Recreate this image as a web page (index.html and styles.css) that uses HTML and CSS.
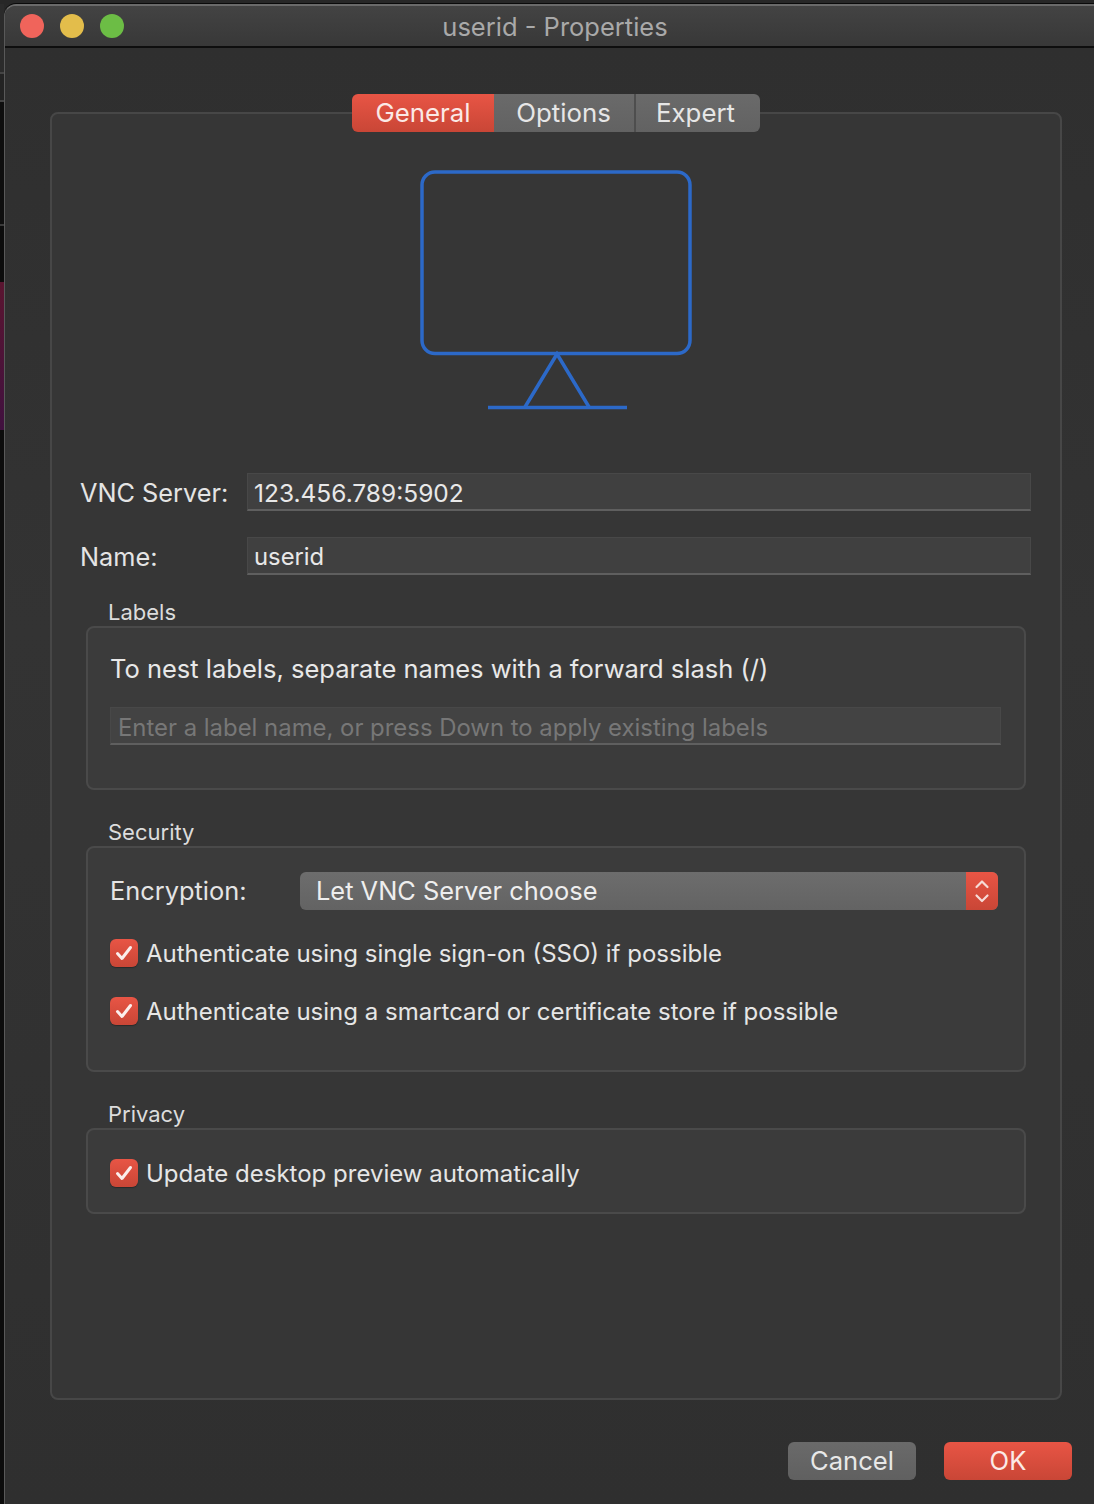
FILE: index.html
```html
<!DOCTYPE html>
<html lang="en">
<head>
<meta charset="utf-8">
<title>userid - Properties</title>
<link rel="stylesheet" href="styles.css">
</head>
<body>
<div class="desktop">
  <div class="backdrop"><div class="backdrop-tint"></div></div>
  <div class="window">
    <header class="titlebar">
      <div class="lights">
        <span class="light light-red"></span>
        <span class="light light-yellow"></span>
        <span class="light light-green"></span>
      </div>
      <div class="title">userid - Properties</div>
    </header>
    <main class="content">
      <section class="pane">
        <nav class="tabs">
          <div class="tab tab-general">General</div>
          <div class="tab tab-options">Options</div>
          <div class="tab tab-expert">Expert</div>
        </nav>
        <div class="monitor">
          <svg width="272" height="242" viewBox="0 0 272 242" fill="none" stroke="#2c69c8" stroke-width="3.500">
            <rect x="2" y="2" width="268" height="181.500" rx="13"/>
            <path d="M105 237 L137 184 L169 237"/>
            <path d="M68 237.500 H207"/>
          </svg>
        </div>
        <div class="form-row row-server">
          <label class="row-label">VNC Server:</label>
          <div class="field field-server">123.456.789:5902</div>
        </div>
        <div class="form-row row-name">
          <label class="row-label">Name:</label>
          <div class="field field-name">userid</div>
        </div>
        <div class="group-title">Labels</div>
        <div class="group group-labels">
          <p class="hint">To nest labels, separate names with a forward slash (/)</p>
          <div class="field field-placeholder">Enter a label name, or press Down to apply existing labels</div>
        </div>
        <div class="group-title">Security</div>
        <div class="group group-security">
          <div class="encryption">
            <span class="encryption-label">Encryption:</span>
            <div class="select">
              <span class="select-value">Let VNC Server choose</span>
              <span class="stepper">
                <svg width="32" height="38" viewBox="0 0 32 38" fill="none" stroke="#f6dcd8" stroke-width="2.200" stroke-linecap="round" stroke-linejoin="round">
                  <path d="M10.500 15 L16 9.500 L21.500 15"/>
                  <path d="M10.500 23.500 L16 29 L21.500 23.500"/>
                </svg>
              </span>
            </div>
          </div>
          <div class="check-row check-first">
            <span class="checkbox"><svg width="28" height="28" viewBox="0 0 28 28" fill="none" stroke="#fbeeec" stroke-width="3" stroke-linecap="round" stroke-linejoin="round"><path d="M7.500 14.500 L12 19.500 L20.500 8.500"/></svg></span>
            <span class="check-text">Authenticate using single sign-on (SSO) if possible</span>
          </div>
          <div class="check-row check-second">
            <span class="checkbox"><svg width="28" height="28" viewBox="0 0 28 28" fill="none" stroke="#fbeeec" stroke-width="3" stroke-linecap="round" stroke-linejoin="round"><path d="M7.500 14.500 L12 19.500 L20.500 8.500"/></svg></span>
            <span class="check-text">Authenticate using a smartcard or certificate store if possible</span>
          </div>
        </div>
        <div class="group-title">Privacy</div>
        <div class="group group-privacy">
          <div class="check-row">
            <span class="checkbox"><svg width="28" height="28" viewBox="0 0 28 28" fill="none" stroke="#fbeeec" stroke-width="3" stroke-linecap="round" stroke-linejoin="round"><path d="M7.500 14.500 L12 19.500 L20.500 8.500"/></svg></span>
            <span class="check-text">Update desktop preview automatically</span>
          </div>
        </div>
      </section>
      <footer class="actions">
        <div class="button button-cancel">Cancel</div>
        <div class="button button-ok">OK</div>
      </footer>
    </main>
  </div>
</div>
</body>
</html>
```
FILE: styles.css
```css
* { box-sizing: border-box; }
html, body { margin: 0; padding: 0; background: #1a1a1a; }
body {
  width: 1094px;
  height: 1504px;
  overflow: hidden;
  font-family: Inter, "Liberation Sans", sans-serif;
  color: #e4e4e4;
}
.desktop { display: flex; height: 1504px; padding-top: 4px; background: #272727; }
.backdrop {
  width: 4px;
  flex: none;
  padding-top: 278px;
  background: linear-gradient(#2b2b2b 68px, #444 68px, #444 70px, #232323 70px, #232323 96px, #444 96px, #444 98px, #0e0e0e 98px, #0e0e0e 220px, #3a3a3a 220px, #3a3a3a 222px, #0c0c0c 222px);
}
.backdrop-tint { height: 148px; background: linear-gradient(#5a1530, #40113f); }
.window {
  flex: 1;
  display: flex;
  flex-direction: column;
  border-left: 1px solid #595959;
  border-top: 2px solid #6a6a6a;
  border-top-left-radius: 12px;
  background: #303030;
  box-shadow: 0 -1px 0 #0a0a0a;
  overflow: hidden;
}
.titlebar {
  flex: none;
  height: 42px;
  position: relative;
  display: flex;
  align-items: center;
  justify-content: center;
  padding-left: 11px;
  border-bottom: 2px solid #0e0e0e;
  background: linear-gradient(#434343, #383838);
}
.lights { position: absolute; left: 15px; top: 8px; display: flex; gap: 16px; }
.light { width: 24px; height: 24px; border-radius: 50%; }
.light-red { background: #f0645b; }
.light-yellow { background: #e3bd4b; }
.light-green { background: #6cbd45; }
.title { font-size: 25.500px; color: #a9a9a9; }
.content {
  flex: 1;
  padding: 64px 32px 0 45px;
  background: linear-gradient(#2f2f2f, #333 40%, #2f2f2f);
}
.pane {
  height: 1288px;
  padding: 0 29px 0 28px;
  border: 2px solid #474747;
  border-radius: 8px;
  background: #363636;
}
.tabs {
  display: flex;
  width: 408px;
  height: 38px;
  margin: -20px auto 0;
  border-radius: 6px;
  overflow: hidden;
  font-size: 25.800px;
}
.tab { display: flex; align-items: center; justify-content: center; padding-bottom: 2px; color: #e6e6e6; background: linear-gradient(#6a6a6a, #626262); }
.tab-general { width: 142px; padding-left: 1px; color: #fbe9e6; background: linear-gradient(#e85545, #c94636); }
.tab-options { width: 142px; border-right: 2px solid #4e4e4e; }
.tab-expert { width: 124px; padding-right: 4px; }
.monitor { display: flex; justify-content: center; padding-top: 38px; height: 341px; }
.monitor svg { display: block; }
.form-row { display: flex; align-items: center; }
.row-server { margin-bottom: 26px; }
.row-name { margin-bottom: 23px; }
.row-label { width: 167px; flex: none; padding-top: 1px; font-size: 25.300px; color: #e4e4e4; }
.field {
  flex: 1;
  height: 38px;
  padding: 2px 6px 0;
  display: flex;
  align-items: center;
  color: #e8e8e8;
  background: #404040;
  border: 1px solid #484848;
  border-bottom: 2px solid #5f5f5f;
}
.field-server { font-size: 24.500px; }
.field-name { font-size: 23.800px; }
.group-title { padding-left: 28px; font-size: 22px; line-height: 28px; color: #dcdcdc; }
.group {
  margin-left: 6px;
  width: 940px;
  border: 2px solid #4a4a4a;
  border-radius: 8px;
  background: #3b3b3b;
  padding: 0 22px;
}
.group-labels { height: 164px; margin-bottom: 28px; }
.group-security { height: 226px; margin-bottom: 28px; }
.group-privacy { height: 86px; padding-top: 29px; }
.hint { margin: 26px 0 23px; font-size: 25.500px; line-height: 30px; color: #e8e8e8; }
.field-placeholder { width: 891px; flex: none; padding: 4px 6px 0 7px; font-size: 23.900px; color: #777; background: #434343; }
.encryption { display: flex; align-items: center; padding-top: 24px; }
.encryption-label { width: 190px; flex: none; padding-bottom: 2px; font-size: 25.400px; }
.select {
  width: 698px;
  height: 38px;
  display: flex;
  justify-content: space-between;
  align-items: center;
  border-radius: 6px;
  overflow: hidden;
  background: linear-gradient(#6d6d6d, #636363);
  font-size: 25.400px;
  color: #eee;
}
.select-value { padding: 0 0 2px 16px; }
.stepper { width: 32px; height: 38px; background: linear-gradient(#e85545, #c94636); }
.stepper svg { display: block; }
.check-row { display: flex; align-items: center; gap: 8px; height: 28px; }
.check-first { margin-top: 29px; }
.check-second { margin-top: 30px; }
.checkbox {
  width: 28px;
  height: 28px;
  flex: none;
  border-radius: 6px;
  background: linear-gradient(#e85545, #c94636);
  box-shadow: 0 1px 1px #2a2a2a;
}
.checkbox svg { display: block; }
.check-text { padding-top: 1px; font-size: 24px; line-height: 27px; color: #e6e6e6; }
.actions { display: flex; justify-content: flex-end; gap: 28px; margin: 42px -10px 0 0; }
.button {
  width: 128px;
  height: 38px;
  display: flex;
  align-items: center;
  justify-content: center;
  padding-bottom: 2px;
  border-radius: 6px;
  font-size: 25.600px;
}
.button-cancel { color: #e8e8e8; background: linear-gradient(#6a6a6a, #606060); }
.button-ok { color: #fbeae7; background: linear-gradient(#e85545, #c94636); }
```
